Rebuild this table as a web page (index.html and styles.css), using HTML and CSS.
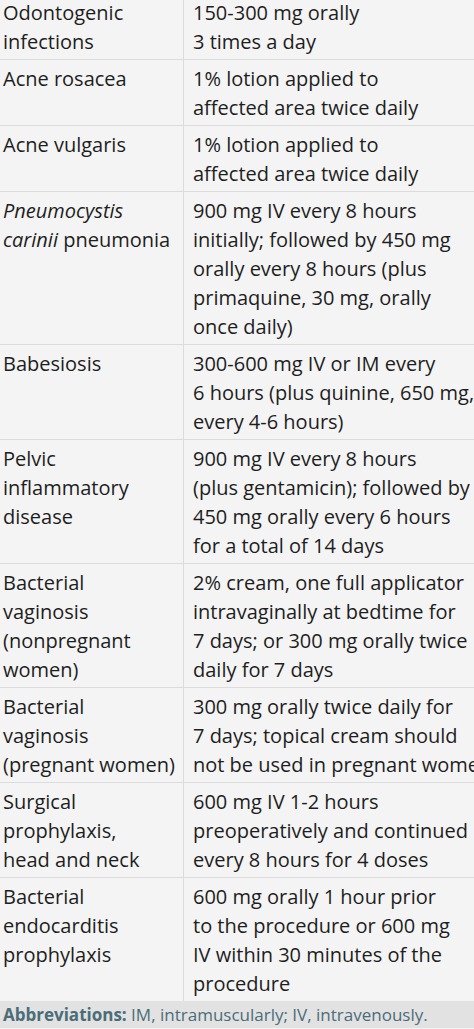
FILE: index.html
```html
<!DOCTYPE html>
<html>
<head>
<meta charset="utf-8">
<link rel="stylesheet" href="styles.css">
</head>
<body>
<div class="frame">
<table class="dosing">
<tbody>
<tr><td class="ind">Odontogenic<br>infections</td><td class="dose">150-300 mg orally<br>3 times a day</td></tr>
<tr><td class="ind">Acne rosacea</td><td class="dose">1% lotion applied to<br>affected area twice daily</td></tr>
<tr><td class="ind">Acne vulgaris</td><td class="dose">1% lotion applied to<br>affected area twice daily</td></tr>
<tr><td class="ind"><i>Pneumocystis</i><br><i>carinii</i> pneumonia</td><td class="dose">900 mg IV every 8 hours<br>initially; followed by 450 mg<br>orally every 8 hours (plus<br>primaquine, 30 mg, orally<br>once daily)</td></tr>
<tr><td class="ind">Babesiosis</td><td class="dose">300-600 mg IV or IM every<br>6 hours (plus quinine, 650 mg,<br>every 4-6 hours)</td></tr>
<tr><td class="ind">Pelvic<br>inflammatory<br>disease</td><td class="dose">900 mg IV every 8 hours<br>(plus gentamicin); followed by<br>450 mg orally every 6 hours<br>for a total of 14 days</td></tr>
<tr><td class="ind">Bacterial<br>vaginosis<br>(nonpregnant<br>women)</td><td class="dose">2% cream, one full applicator<br>intravaginally at bedtime for<br>7 days; or 300 mg orally twice<br>daily for 7 days</td></tr>
<tr><td class="ind">Bacterial<br>vaginosis<br>(pregnant women)</td><td class="dose">300 mg orally twice daily for<br>7 days; topical cream should<br>not be used in pregnant women</td></tr>
<tr><td class="ind">Surgical<br>prophylaxis,<br>head and neck</td><td class="dose">600 mg IV 1-2 hours<br>preoperatively and continued<br>every 8 hours for 4 doses</td></tr>
<tr><td class="ind">Bacterial<br>endocarditis<br>prophylaxis</td><td class="dose">600 mg orally 1 hour prior<br>to the procedure or 600 mg<br>IV within 30 minutes of the<br>procedure</td></tr>
</tbody>
</table>
<div class="foot"><b>Abbreviations:</b> IM, intramuscularly; IV, intravenously.</div>
</div>
</body>
</html>
```

FILE: styles.css
```css
html, body {
  margin: 0;
  padding: 0;
  background: #f4f4f4;
}
.frame {
  width: 474px;
  height: 1029px;
  overflow: hidden;
  font-family: "Open Sans", "DejaVu Sans", sans-serif;
  font-size: 20px;
  line-height: 29px;
  color: #1e1e1e;
}
.dosing {
  border-collapse: collapse;
  table-layout: fixed;
  width: 580px;
  margin-top: -6px;
}
.dosing td {
  vertical-align: top;
  padding: 4px 0 3px;
  border-bottom: 1px solid #dcdcdc;
  white-space: nowrap;
  overflow: hidden;
}
.ind {
  width: 180px;
  padding-left: 3px !important;
  border-right: 1px solid #dcdcdc;
}
.dose {
  padding-left: 9px !important;
}
.dosing tr:last-child td {
  border-bottom: none;
}
.foot {
  background: #e2e2e2;
  color: #4b6d78;
  padding: 0 3px;
  height: 27px;
  line-height: 27px;
  font-size: 17px;
  white-space: nowrap;
}
.foot b {
  font-weight: 700;
}
```
